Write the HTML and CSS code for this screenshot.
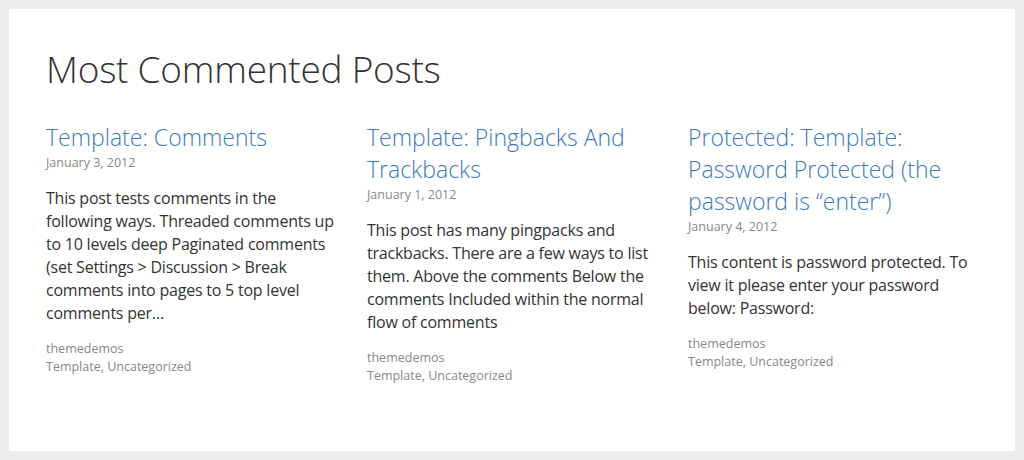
FILE: index.html
```html
<!DOCTYPE html>
<html>
<head>
    <title>Most Commented Posts</title>
    <link rel="stylesheet" href="styles.css">
</head>
<body>
    <div class="container">
        <h2 class="header">Most Commented Posts</h2>
        <div class="posts">
            <div class="post">
                <h3 class="post-title">Template: Comments</h3>
                <div class="post-date">January 3, 2012</div>
                <p class="excerpt">This post tests comments in the following ways. Threaded comments up to 10 levels deep Paginated comments (set Settings &gt; Discussion &gt; Break comments into pages to 5 top level comments per&hellip;</p>
                <div class="meta">
                    <div>themedemos</div>
                    <div>Template, Uncategorized</div>
                </div>
            </div>
            <div class="post">
                <h3 class="post-title">Template: Pingbacks And Trackbacks</h3>
                <div class="post-date">January 1, 2012</div>
                <p class="excerpt">This post has many pingpacks and trackbacks. There are a few ways to list them. Above the comments Below the comments Included within the normal flow of comments</p>
                <div class="meta">
                    <div>themedemos</div>
                    <div>Template, Uncategorized</div>
                </div>
            </div>
            <div class="post">
                <h3 class="post-title">Protected: Template: Password Protected (the password is &ldquo;enter&rdquo;)</h3>
                <div class="post-date">January 4, 2012</div>
                <p class="excerpt">This content is password protected. To view it please enter your password below: Password:</p>
                <div class="meta">
                    <div>themedemos</div>
                    <div>Template, Uncategorized</div>
                </div>
            </div>
        </div>
    </div>
</body>
</html>
```

FILE: styles.css
```css
body {
    font-family: 'Open Sans', sans-serif;
    background-color: #ececec;
    margin: 0;
    padding: 9px;
    height: 100vh;
    box-sizing: border-box;
}

.container {
    background-color: #FFFFFF;
    height: 100%;
    box-sizing: border-box;
    padding: 36px 37px 0 37px;
}

.header {
    font-size: 37px;
    font-weight: 300;
    letter-spacing: -0.25px;
    color: #333;
    margin: 0 0 28px;
    line-height: 48px;
}

.posts {
    display: grid;
    grid-template-columns: repeat(3, 1fr);
    column-gap: 31px;
}

/* post titles are plain headings, coloured like links */
.post-title {
    font-size: 23px;
    font-weight: 300;
    line-height: 32px;
    margin: 0;
    color: #3b7bc2;
}

.post-date {
    font-size: 12.5px;
    color: #888;
    line-height: 18px;
    margin-top: 1px;
}

.excerpt {
    font-size: 16px;
    letter-spacing: -0.22px;
    line-height: 23px;
    color: #333;
    margin: 15px 0 15px;
}

.meta {
    font-size: 12.5px;
    line-height: 18px;
    color: #888;
}
```
